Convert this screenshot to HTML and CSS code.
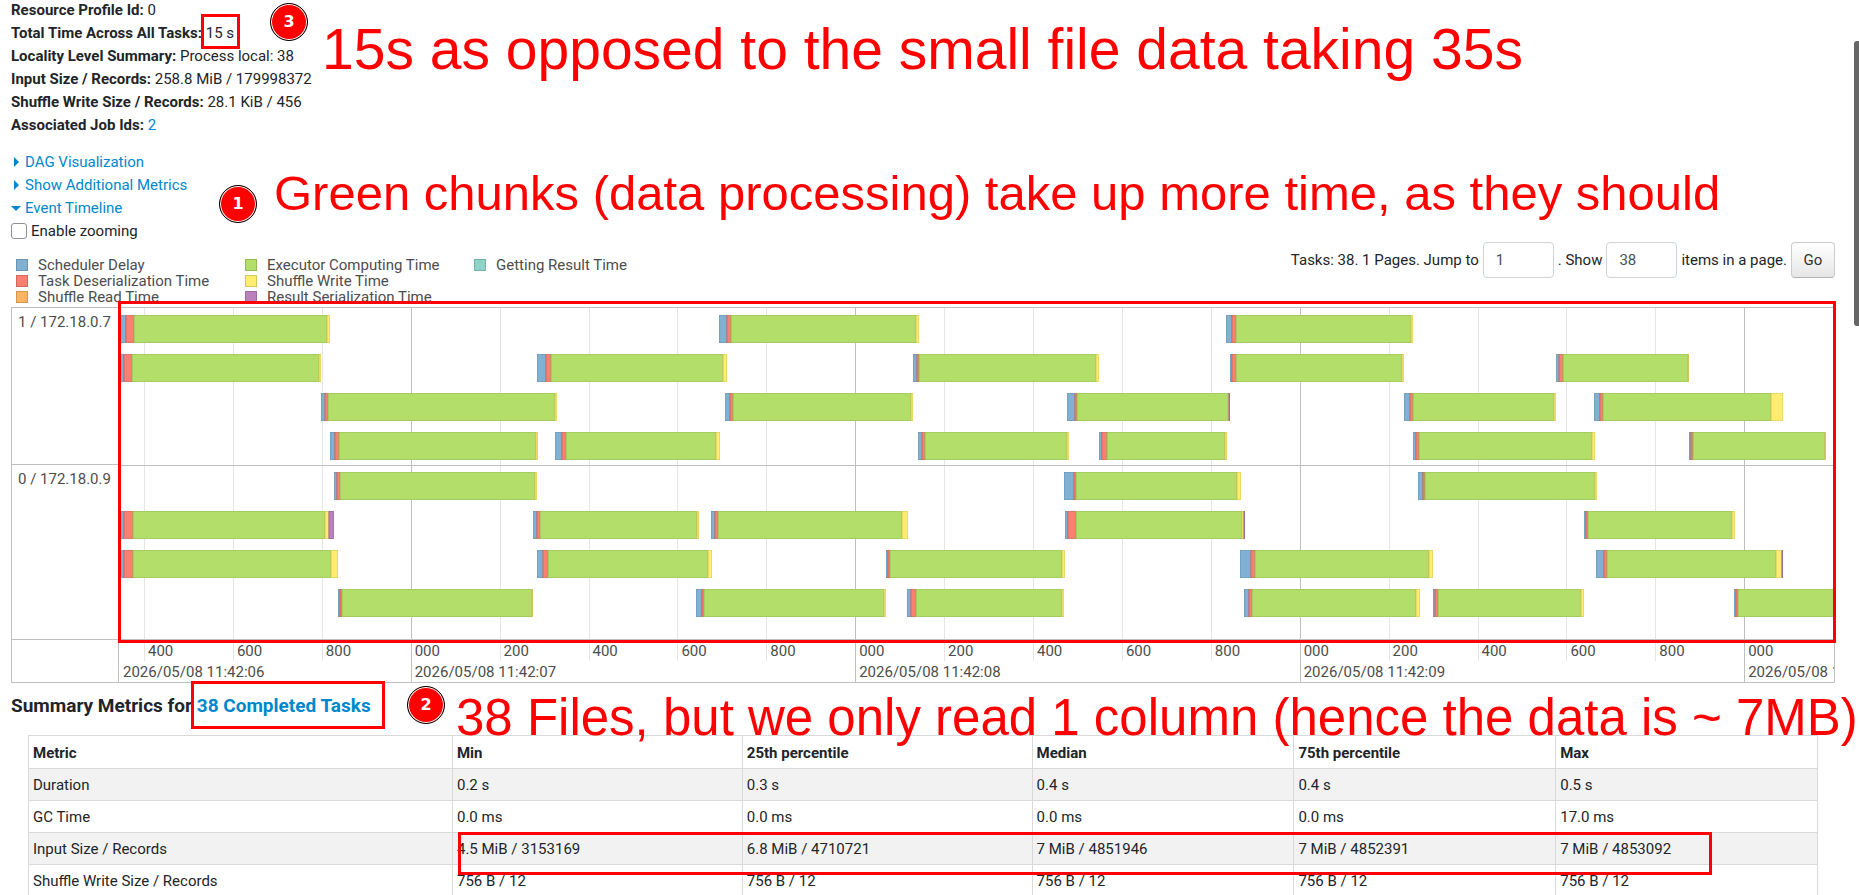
FILE: index.html
```html
<!DOCTYPE html>
<html lang="en">
  <head>
    <title>Details for Stage 2</title>
    <meta charset="utf-8">
    <link rel="stylesheet" href="styles.css">
  </head>
  <body>

  <div class="page">
    <ul class="summary">
      <li><strong>Resource Profile Id:</strong> 0</li>
      <li><strong>Total Time Across All Tasks:</strong> <span class="marked">15 s<span class="box box-time"></span></span></li>
      <li><strong>Locality Level Summary:</strong> Process local: 38</li>
      <li><strong>Input Size / Records:</strong> 258.8 MiB / 179998372</li>
      <li><strong>Shuffle Write Size / Records:</strong> 28.1 KiB / 456</li>
      <li><strong>Associated Job Ids:</strong> <a href="#job">2</a></li>
    </ul>

    <div class="toggles">
      <a href="#dag"><span class="arrow"></span>DAG Visualization</a>
      <a href="#metrics"><span class="arrow"></span>Show Additional Metrics</a>
      <a href="#timeline"><span class="arrow open"></span>Event Timeline</a>
      <label class="zooming"><input type="checkbox"> Enable zooming</label>
    </div>

    <div class="controls">
      <ul class="legend">
        <li><i class="scheduler"></i>Scheduler Delay</li>
        <li><i class="deserialization"></i>Task Deserialization Time</li>
        <li><i class="shuffle-read"></i>Shuffle Read Time</li>
        <li><i class="computing"></i>Executor Computing Time</li>
        <li><i class="shuffle-write"></i>Shuffle Write Time</li>
        <li><i class="serialization"></i>Result Serialization Time</li>
        <li><i class="getting"></i>Getting Result Time</li>
      </ul>
      <form class="pager">
        <label for="page-no">Tasks: 38. 1 Pages. Jump to</label>
        <input type="text" id="page-no" value="1">
        <label for="page-size">. Show</label>
        <input type="text" id="page-size" value="38">
        <span>items in a page.</span>
        <button type="button">Go</button>
      </form>
    </div>

    <div class="timeline" id="timeline">
      <div class="hosts">
        <div class="host">1 / 172.18.0.7</div>
        <div class="host">0 / 172.18.0.9</div>
      </div>
      <div class="plot">
        <div class="ticks" id="ticks"></div>
        <div class="group" id="executor-1"></div>
        <div class="group last" id="executor-0"></div>
        <div class="axis"></div>
      </div>
      <span class="box box-timeline"></span>
    </div>

    <h4>Summary Metrics for <a class="marked" href="#tasks">38 Completed Tasks<span class="box box-tasks"></span></a></h4>

    <div class="metrics">
      <table>
        <thead>
          <tr><th class="metric">Metric</th><th class="wide">Min</th><th class="wide">25th percentile</th><th>Median</th><th>75th percentile</th><th>Max</th></tr>
        </thead>
        <tbody>
          <tr><td>Duration</td><td>0.2 s</td><td>0.3 s</td><td>0.4 s</td><td>0.4 s</td><td>0.5 s</td></tr>
          <tr><td>GC Time</td><td>0.0 ms</td><td>0.0 ms</td><td>0.0 ms</td><td>0.0 ms</td><td>17.0 ms</td></tr>
          <tr><td>Input Size / Records</td><td>4.5 MiB / 3153169</td><td>6.8 MiB / 4710721</td><td>7 MiB / 4851946</td><td>7 MiB / 4852391</td><td>7 MiB / 4853092</td></tr>
          <tr><td>Shuffle Write Size / Records</td><td>756 B / 12</td><td>756 B / 12</td><td>756 B / 12</td><td>756 B / 12</td><td>756 B / 12</td></tr>
        </tbody>
      </table>
      <span class="box box-input"></span>
    </div>
  </div>

  <!-- notes over the page -->
  <span class="badge badge-time">3</span>
  <p class="note note-time">15s as opposed to the small file data taking 35s</p>
  <span class="badge badge-green">1</span>
  <p class="note note-green">Green chunks (data processing) take up more time, as they should</p>
  <span class="badge badge-files">2</span>
  <p class="note note-files">38 Files, but we only read 1 column (hence the data is ~ 7MB)</p>

  <div class="scrollbar"></div>

  <script src="timeline.js"></script>
  </body>
</html>
```

FILE: styles.css
```css
* {
  box-sizing: border-box;
}
body {
  margin: 0;
  position: relative;
  height: 100vh;
  overflow: hidden;
  background: #fff;
  color: #212529;
  font-family: Roboto, sans-serif;
  font-size: 15px;
  line-height: 23px;
}
a {
  color: #0088cc;
  text-decoration: none;
}
ul {
  margin: 0;
  padding: 0;
  list-style: none;
}

.page {
  padding: 0 24px 0 11px;
}
.summary {
  margin-top: -1px;
}
.toggles {
  display: flex;
  flex-direction: column;
  align-items: flex-start;
  margin-top: 14px;
}
.arrow {
  display: inline-block;
  width: 14px;
  height: 10px;
}
.arrow::before {
  content: "";
  display: block;
  width: 0;
  margin-left: 3px;
  border: 5px solid transparent;
  border-left-color: #0088cc;
  border-right-width: 0;
}
.arrow.open::before {
  margin: 3px 0 0;
  border: 5px solid transparent;
  border-top-color: #0088cc;
  border-bottom-width: 0;
}
.zooming {
  display: flex;
  align-items: center;
  gap: 4px;
  line-height: 22px;
}
.zooming input {
  appearance: none;
  width: 16px;
  height: 16px;
  margin: 0;
  border: 1px solid #8f8f9d;
  border-radius: 3px;
  background: #fff;
}

.controls {
  display: flex;
  justify-content: space-between;
  height: 65px;
}
.legend {
  display: grid;
  grid-template-rows: repeat(3, 16px);
  grid-auto-flow: column;
  grid-auto-columns: 229px;
  align-content: start;
  padding: 15px 0 0 5px;
  color: #4d4d4d;
  line-height: 16px;
}
.legend li {
  display: flex;
  align-items: center;
  gap: 10px;
}
.legend i {
  width: 12px;
  height: 12px;
  border: 1px solid;
}
.legend .scheduler { background: #80b1d3; border-color: #6b94b0; }
.legend .deserialization { background: #fb8072; border-color: #d26b5f; }
.legend .shuffle-read { background: #fdb462; border-color: #d39651; }
.legend .computing { background: #b3de69; border-color: #95b957; }
.legend .shuffle-write { background: #ffed6f; border-color: #d5c65c; }
.legend .serialization { background: #bc80bd; border-color: #9d6b9e; }
.legend .getting { background: #8dd3c7; border-color: #75b0a6; }

.pager {
  display: flex;
  align-items: center;
  gap: 4px;
  height: 36px;
}
.pager input {
  width: 71px;
  height: 36px;
  padding: 0 12px;
  border: 1px solid #ced4da;
  border-radius: 4px;
  color: #495057;
  font: inherit;
}
.pager button {
  width: 44px;
  height: 36px;
  padding: 0;
  border: 1px solid #ccc;
  border-bottom-color: #b3b3b3;
  border-radius: 4px;
  background: linear-gradient(#fff, #e6e6e6);
  color: #333;
  font: inherit;
}

.timeline {
  position: relative;
  display: flex;
  border: 1px solid #bfbfbf;
  color: #4d4d4d;
}
.hosts {
  flex: none;
  width: 107px;
  border-right: 1px solid #bfbfbf;
}
.host {
  height: 157px;
  padding: 3px 6px;
  border-bottom: 1px solid #bfbfbf;
}
.host + .host {
  height: 175px;
}
.plot {
  position: relative;
  flex: 1;
  padding-top: 1px;
  overflow: hidden;
}
.group {
  position: relative;
  display: flex;
  flex-direction: column;
  gap: 11px;
  padding: 6px 0 5px;
  border-bottom: 1px solid #bfbfbf;
}
.group.last {
  padding-bottom: 22px;
}
.lane {
  position: relative;
  height: 28px;
}
.task {
  position: absolute;
  top: 0;
  height: 28px;
}
.task .scheduler { fill: #80b1d3; stroke: #6b94b0; }
.task .deserialization { fill: #fb8072; stroke: #d26b5f; }
.task .computing { fill: #b3de69; stroke: #95b957; }
.task .shuffle-write { fill: #ffed6f; stroke: #d5c65c; }
.task .serialization { fill: #bc80bd; stroke: #9d6b9e; }
.axis {
  height: 42px;
}
.tick {
  position: absolute;
  top: 0;
  height: 353px;
  padding: 333px 0 0 3px;
  border-left: 1px solid #e5e5e5;
  line-height: 21px;
  white-space: nowrap;
}
.tick.major {
  height: 100%;
  border-color: #bfbfbf;
}
.tick.first {
  border-color: transparent;
}
.tick span {
  display: block;
  height: 21px;
}

h4 {
  margin: 12px 0 18px;
  font-size: 19px;
  line-height: 22px;
}
.metrics {
  position: relative;
  margin: 0 17px;
}
table {
  width: 100%;
  table-layout: fixed;
  border-collapse: collapse;
}
th, td {
  height: 32px;
  padding: 5px 4px 3px;
  border: 1px solid #d9d9d9;
  text-align: left;
}
th {
  height: 33px;
}
.metric {
  width: 23.7%;
}
.wide {
  width: 16.2%;
}
tbody tr:nth-child(odd) {
  background: #f2f2f2;
}

.marked {
  position: relative;
}
.box {
  position: absolute;
  border: 3px solid #f00;
}
.box-time {
  inset: -10px -6px -7px -5px;
}
.box-timeline {
  inset: -7px -2px 39px 106px;
}
.box-tasks {
  inset: -13px -14px -12px -6px;
}
.box-input {
  top: 97px;
  left: 24%;
  right: 106px;
  height: 43px;
}
.note {
  position: absolute;
  margin: 0;
  color: #f00;
  font-family: "Liberation Sans", sans-serif;
  line-height: 60px;
  white-space: nowrap;
}
.note-time {
  top: 19px;
  left: 322px;
  font-size: 57px;
}
.note-green {
  top: 163px;
  left: 274px;
  font-size: 49px;
}
.note-files {
  top: 688px;
  left: 456px;
  font-size: 51px;
}
.badge {
  position: absolute;
  width: 38px;
  height: 38px;
  border: 1px solid #000;
  border-radius: 50%;
  background: #f00;
  box-shadow: inset 0 0 0 1px #fff;
  color: #fff;
  font: bold 16px/36px "DejaVu Sans", sans-serif;
  text-align: center;
}
.badge-time {
  top: 3px;
  left: 270px;
}
.badge-green {
  top: 185px;
  left: 219px;
}
.badge-files {
  top: 686px;
  left: 407px;
}
.scrollbar {
  position: absolute;
  top: 41px;
  right: 0;
  width: 5px;
  height: 285px;
  border-radius: 3px 0 0 3px;
  background: #666;
}
```

FILE: timeline.js
```javascript
// The visible window is split into 1715 units, 200 ms is 89 of them.
var WINDOW = 1715;
var PHASES = ["scheduler", "deserialization", "computing", "shuffle-write", "serialization"];

// One array per lane. A task lists its start and then the end of each phase.
var executors = {
  "executor-1": [
    [[-3, 7, 15, 208, 211], [600, 608, 612, 797, 800], [1107, 1113, 1117, 1292, 1294]],
    [[-3, 5, 13, 200, 202], [418, 427, 432, 604, 608], [794, 798, 800, 977, 980],
     [1111, 1113, 1117, 1283, 1285], [1437, 1440, 1444, 1569, 1570]],
    [[202, 206, 209, 436, 438], [606, 611, 614, 792, 794], [948, 956, 958, 1109, 1110, 1111],
     [1285, 1291, 1294, 1435, 1437], [1475, 1481, 1484, 1652, 1664]],
    [[211, 216, 220, 417, 419], [436, 443, 447, 597, 601], [799, 803, 806, 948, 950],
     [980, 983, 988, 1106, 1108], [1294, 1297, 1300, 1473, 1476], [1570, 1572, 1574, 1706, 1707]]
  ],
  "executor-0": [
    [[215, 218, 221, 416, 418], [945, 955, 957, 1118, 1122], [1299, 1304, 1306, 1476, 1478]],
    [[-3, 5, 14, 206, 210, 215], [414, 418, 421, 578, 580], [592, 596, 599, 783, 789],
     [946, 949, 957, 1123, 1125, 1126], [1465, 1467, 1469, 1613, 1616]],
    [[-3, 5, 14, 212, 219], [418, 424, 429, 589, 593], [767, 769, 771, 943, 946],
     [1121, 1132, 1136, 1310, 1314], [1477, 1485, 1488, 1657, 1663, 1664]],
    [[219, 221, 223, 413, 414], [577, 583, 585, 765, 767], [788, 792, 797, 943, 945],
     [1125, 1130, 1133, 1297, 1301], [1314, 1316, 1319, 1462, 1465], [1615, 1617, 1619, 1790, 1795]]
  ]
};

var SVG = "http://www.w3.org/2000/svg";

function drawTask(lane, task) {
  var start = task[0];
  var length = task[task.length - 1] - start;
  var svg = document.createElementNS(SVG, "svg");
  svg.setAttribute("class", "task");
  svg.style.left = 100 * start / WINDOW + "%";
  svg.style.width = 100 * length / WINDOW + "%";
  for (var i = 1; i < task.length; i++) {
    var rect = document.createElementNS(SVG, "rect");
    rect.setAttribute("class", PHASES[i - 1]);
    rect.setAttribute("x", 100 * (task[i - 1] - start) / length + "%");
    rect.setAttribute("width", 100 * (task[i] - task[i - 1]) / length + "%");
    rect.setAttribute("height", "100%");
    svg.appendChild(rect);
  }
  lane.appendChild(svg);
}

for (var id in executors) {
  executors[id].forEach(function(tasks) {
    var lane = document.createElement("div");
    lane.className = "lane";
    tasks.forEach(function(task) { drawTask(lane, task); });
    document.getElementById(id).appendChild(lane);
  });
}

function drawTick(at, type, label, date) {
  var tick = document.createElement("div");
  tick.className = "tick " + type;
  tick.style.left = 100 * at / WINDOW + "%";
  [label, date].forEach(function(text) {
    var line = document.createElement("span");
    line.textContent = text;
    tick.appendChild(line);
  });
  document.getElementById("ticks").appendChild(tick);
}

drawTick(0, "major first", "", "2026/05/08 11:42:06");
for (var i = 0; i < 19; i++) {
  var ms = 400 + i * 200;
  var whole = ms % 1000 == 0;
  drawTick(25 + i * 88.9, whole ? "major" : "", whole ? "000" : ms % 1000,
    whole ? "2026/05/08 11:42:0" + (6 + ms / 1000) : "");
}
```
